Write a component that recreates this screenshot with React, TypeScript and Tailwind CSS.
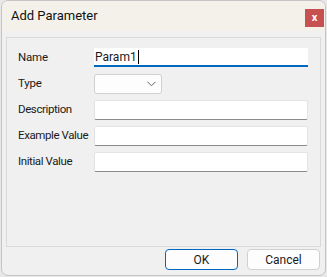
export default function App() {
  const rows = ["Description", "Example Value", "Initial Value"]
  return (
    <div className="w-[327px] h-[277px] bg-[#e8e8e8] font-['Roboto','Noto_Sans',sans-serif] text-[#1a1a1a]">
      <div className="ml-[1px] w-[325px] h-[276px] flex flex-col border border-[#c4c4c4] rounded-[7px] overflow-hidden bg-[#f0f0f0]">
        <div className="h-[30px] shrink-0 flex justify-between bg-[#f4f1ea] pl-[9px] pr-[1px]">
          <span className="text-[13px] leading-[30px] text-[#111]">Add Parameter</span>
          <div className="mt-[8px] w-[19px] h-[18px] bg-[#c75050] flex items-center justify-center text-white text-[11px] font-bold leading-none pb-[2px]">
            x
          </div>
        </div>
        <div className="mt-[6px] ml-[4px] w-[315px] h-[210px] border border-[#d9d9d9] pl-[11px] pt-[10px]">
          <div className="flex items-center h-[19px]">
            <span className="w-[76px] shrink-0 whitespace-nowrap text-[11.5px] tracking-[-0.2px]">Name</span>
            <div className="w-[214px] h-[19px] bg-white border-b-2 border-[#0067c0] flex items-center pl-[1px] text-[12px] leading-none">
              Param1<span className="w-[1px] h-[14px] bg-black ml-[1px]" />
            </div>
          </div>
          <div className="flex items-center h-[20px] mt-[7px]">
            <span className="w-[76px] shrink-0 whitespace-nowrap text-[11.5px] tracking-[-0.2px]">Type</span>
            <div className="w-[68px] h-[20px] bg-[#fdfdfd] border border-[#d0d0d0] rounded-[3px] flex items-center justify-end pr-[5px]">
              <svg width="9" height="6" viewBox="0 0 9 6" fill="none" stroke="#5f5f5f" strokeWidth="1">
                <path d="M0.5 0.8 L4.5 4.8 L8.5 0.8" />
              </svg>
            </div>
          </div>
          {rows.map((r) => (
            <div key={r} className="flex items-center h-[20px] mt-[6px]">
              <span className="w-[76px] shrink-0 whitespace-nowrap text-[11.5px] tracking-[-0.4px]">{r}</span>
              <div className="w-[214px] h-[20px] bg-white border border-[#e3e3e3] border-b-[#8a8a8a] rounded-[2px]" />
            </div>
          ))}
        </div>
        <div className="flex justify-end gap-[9px] pr-[5px] mt-[2px]">
          <button className="w-[73px] h-[21px] bg-[#fdfdfd] border border-[#0067c0] rounded-[4px] text-[12px] leading-none">OK</button>
          <button className="w-[73px] h-[21px] bg-[#fdfdfd] border border-[#d0d0d0] rounded-[4px] text-[12px] leading-none">Cancel</button>
        </div>
      </div>
    </div>
  )
}
